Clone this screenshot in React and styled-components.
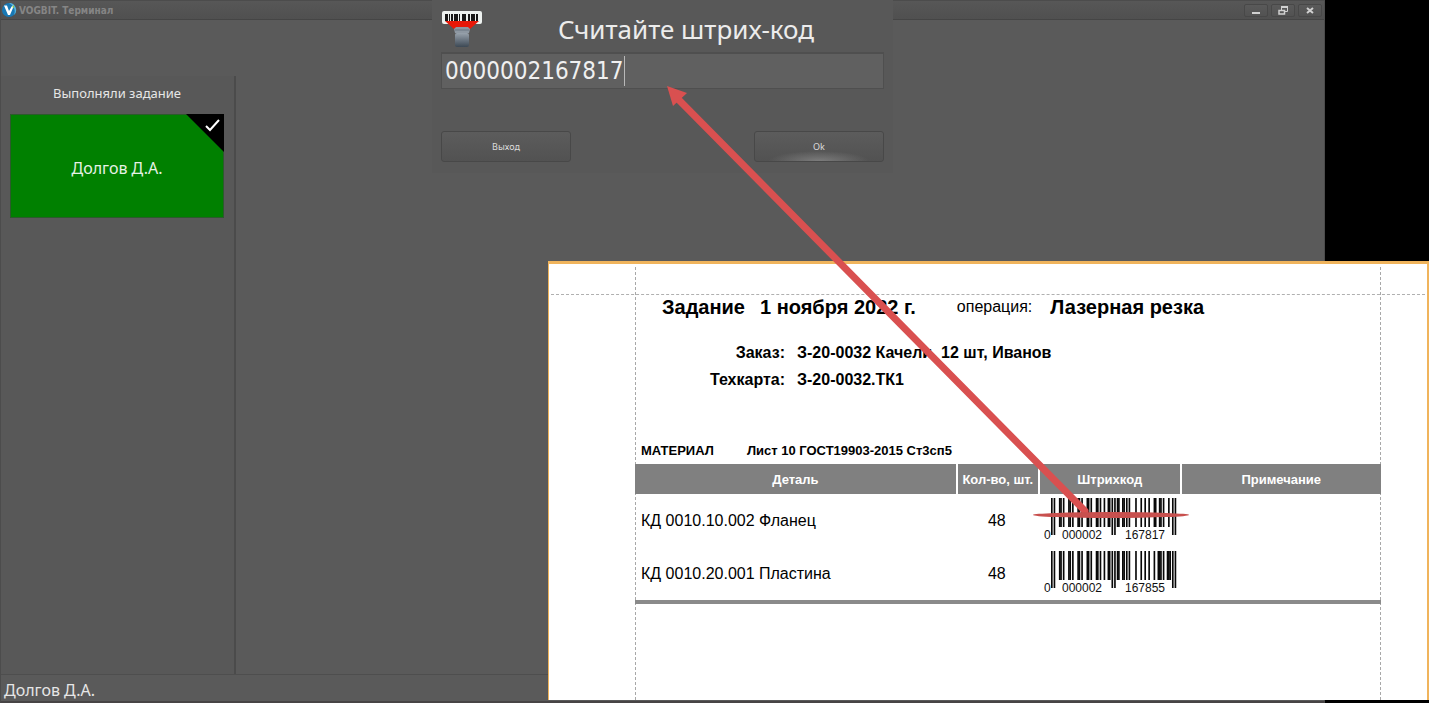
import React, { useState } from 'react'
import styled, { createGlobalStyle } from 'styled-components'

const GlobalStyle = createGlobalStyle`
  * {
    box-sizing: border-box;
  }
  body {
    margin: 0;
    background: #000;
    font-family: "Noto Sans", "DejaVu Sans", sans-serif;
  }
`;

const Desktop = styled.div`
  position: relative;
  display: flex;
  min-height: 100vh;
  padding-right: 104px;
  overflow: hidden;
`;

const Terminal = styled.main`
  flex: 1;
  display: flex;
  flex-direction: column;
  background: #5a5a5a;
  border: 1px solid #4c4c4c;
  border-bottom: 2px solid #474445;
  color: #e6e6e6;
`;

const TitleBar = styled.header`
  display: flex;
  align-items: center;
  gap: 2px;
  height: 19px;
  padding: 0 2px 0 0;
  background: linear-gradient(#575757, #505050);
  border-bottom: 1px solid #454545;
  h1 {
    flex: 1;
    margin: 0;
    color: #858585;
    font-family: "DejaVu Sans Condensed", "DejaVu Sans", sans-serif;
    font-size: 10px;
    font-weight: bold;
  }
`;

const WindowButtons = styled.div`
  display: flex;
  gap: 3px;
`;

const WindowButton = styled.button`
  display: flex;
  align-items: center;
  justify-content: center;
  width: 24px;
  height: 13px;
  padding: 0;
  border: 1px solid #484848;
  border-radius: 2px;
  background: linear-gradient(#5a5a5a, #525252);
`;

const Workspace = styled.div`
  flex: 1;
  display: flex;
  padding-top: 56px;
`;

const Sidebar = styled.aside`
  display: flex;
  flex-direction: column;
  width: 235px;
  padding: 7px 10px 0 9px;
  background: #585858;
  border-right: 2px solid #4b4b4b;
  h2 {
    margin: 0 0 10px;
    font-size: 13px;
    font-weight: normal;
    line-height: 21px;
    text-align: center;
  }
`;

const WorkerCard = styled.button`
  position: relative;
  height: 104px;
  padding: 4px 0 0;
  border: 1px solid #2c5a2c;
  background: #008000;
  color: #e6f2e6;
  font-family: inherit;
  font-size: 16px;
`;

const DoneMark = styled.svg`
  position: absolute;
  top: -1px;
  right: -1px;
`;

const StatusBar = styled.footer`
  padding: 3px 3px 0;
  height: 27px;
  border-top: 1px solid #4e4e4e;
  font-size: 16px;
  line-height: 25px;
`;

const ScanDialog = styled.form`
  position: absolute;
  top: 0;
  left: 432px;
  width: 461px;
  padding: 10px 9px 11px;
  background: #585858;
  color: #ececec;
`;

const DialogHead = styled.div`
  display: flex;
  height: 42px;
  label {
    flex: 1;
    padding-left: 5px;
    font-size: 26px;
    line-height: 39px;
    text-align: center;
  }
`;

const CodeField = styled.div`
  display: flex;
  align-items: center;
  height: 37px;
  padding-left: 3px;
  border: 1px solid #4f4f4f;
  border-top-width: 2px;
  background: #606060;
  input {
    field-sizing: content;
    padding: 0;
    border: 0;
    outline: 0;
    background: none;
    color: #f0f0f0;
    font-family: "DejaVu Sans Condensed", "DejaVu Sans", sans-serif;
    font-size: 24px;
  }
`;

const Caret = styled.span`
  width: 1px;
  height: 30px;
  background: #b8b8b8;
`;

const DialogActions = styled.div`
  display: flex;
  justify-content: space-between;
  padding-top: 42px;
`;

const DialogButton = styled.button`
  width: 130px;
  height: 31px;
  padding: 0;
  border: 1px solid #484848;
  border-radius: 3px;
  background: ${({ $primary }) => ($primary
    ? 'radial-gradient(ellipse 50px 10px at 50% 100%, #7c7c7c, transparent), linear-gradient(#5c5c5c, #525252)'
    : 'linear-gradient(#5c5c5c, #525252)')};
  color: #dcdcdc;
  font-family: inherit;
  font-size: 9px;
`;

const Sheet = styled.section`
  position: absolute;
  top: 261px;
  right: 0;
  bottom: 3px;
  left: 548px;
  padding: 3px 46px 0 86px;
  border: 1px solid #f0b45c;
  border-width: 3px 2px 0 1px;
  background: #fff;
  color: #000;
  font-family: "Liberation Sans", Arial, sans-serif;
  &::before {
    content: "";
    position: absolute;
    top: 30px;
    right: 2px;
    left: 2px;
    border-top: 1px dashed #b0b0b0;
  }
`;

const Page = styled.article`
  height: 100%;
  padding-top: 28px;
  border: 1px dashed #a8a8a8;
  border-width: 0 1px;
`;

const SheetTitle = styled.div`
  display: flex;
  align-items: center;
  padding-left: 26px;
  line-height: 24px;
  font-size: 16px;
  h2 {
    display: flex;
    gap: 15px;
    margin: 0;
    font-size: 20px;
  }
  h2:first-child {
    margin-right: 41px;
  }
  span {
    margin-right: 18px;
  }
`;

const Details = styled.dl`
  display: grid;
  grid-template-columns: 149px 1fr;
  column-gap: 12px;
  margin: 20px 0 45px;
  font-size: 16px;
  font-weight: bold;
  line-height: 27px;
  dt {
    text-align: right;
  }
  dd {
    margin: 0;
  }
`;

const Material = styled.p`
  display: flex;
  gap: 33px;
  margin: 0;
  padding-left: 5px;
  font-size: 13px;
  font-weight: bold;
  line-height: 26px;
`;

const PartsTable = styled.table`
  width: calc(100% + 2px);
  margin: 0 -1px;
  border-spacing: 0;
  border-bottom: 4px solid #8a8a8a;
  table-layout: fixed;
  font-size: 16px;
  th {
    height: 30px;
    padding: 0;
    background: #808080;
    color: #fff;
    font-size: 13px;
  }
  th + th {
    border-left: 2px solid #fff;
  }
  td {
    height: 53px;
    padding: 0 0 0 6px;
  }
  td:nth-child(2) {
    padding: 0;
    text-align: center;
  }
`;

const Barcode = styled.svg`
  display: block;
`;

const Pointer = styled.svg`
  position: absolute;
  top: 0;
  left: 0;
  pointer-events: none;
`;

const parts = [
  { name: 'КД 0010.10.002 Фланец', count: 48, code: '0000002167817' },
  { name: 'КД 0010.20.001 Пластина', count: 48, code: '0000002167855' },
];

const L_CODES = ['0001101', '0011001', '0010011', '0111101', '0100011', '0110001', '0101111', '0111011', '0110111', '0001011'];

// EAN-13 with a leading zero: the left half only uses the L set
const encode = (code) => {
  const left = [...code.slice(1, 7)].map((d) => L_CODES[d]).join('');
  const right = [...code.slice(7)].map((d) => L_CODES[d].replace(/./g, (b) => (b === '1' ? '0' : '1'))).join('');
  return '101' + left + '01010' + right + '101';
};

const isGuard = (i) => i < 3 || i > 91 || (i > 44 && i < 50);

const EanCode = ({ code }) => (
  <Barcode width="136" height="45" role="img" aria-label={code}>
    <g transform="translate(7 0) scale(1.315 1)">
      {[...encode(code)].map((bit, i) => bit === '1' && (
        <rect key={i} x={i} y="0" width="1.250" height={isGuard(i) ? 37 : 29} fill="#080808" />
      ))}
    </g>
    <g fontSize="12" fill="#111">
      <text x="0" y="41">{code[0]}</text>
      <text x="18" y="41">{code.slice(1, 7)}</text>
      <text x="81" y="41">{code.slice(7)}</text>
    </g>
  </Barcode>
);

const Logo = () => (
  <svg width="16" height="16" viewBox="0 0 16 16">
    <circle cx="8" cy="8" r="7" fill="#1878b4" />
    <path d="M8 1a7 7 0 0 1 5 12c2-5 0-9-5-12z" fill="#58b4dc" />
    <path d="M3 3.500L6 3.500L8 9L11 4L13 3.500L9 13L7 13Z" fill="#fff" />
    <path d="M11 5l2-2 0 3z" fill="#8cc850" />
  </svg>
);

const ScannerIcon = () => (
  <svg width="42" height="40" viewBox="0 0 42 40">
    <defs>
      <linearGradient id="handle" x1="0" y1="0" x2="0" y2="1">
        <stop offset="0" stopColor="#98a2ac" />
        <stop offset="1" stopColor="#3c4854" />
      </linearGradient>
    </defs>
    <rect x="1" y="1" width="40" height="13" rx="2" fill="#eef2f0" />
    <path d="M4 4h3v7H4zM8 4h1v7H8zM10 4h2v7h-2zM13 4h4v7h-4zM18 4h1v7h-1zM21 4h4v7h-4zM27 4h2v7h-2zM30 4h4v7h-4zM35 4h2v7h-2z" fill="#181818" />
    <path d="M4 11h34l-9 8H13z" fill="#e81808" />
    <path d="M15 17h12l2 2-1 4H14l-1-4z" fill="#8e98a2" />
    <path d="M14 20h14" stroke="#687480" strokeWidth="1" />
    <rect x="14" y="23" width="14" height="14" rx="2" fill="url(#handle)" />
  </svg>
);

const App = () => {
  const [code, setCode] = useState('0000002167817');

  return (
    <Desktop>
      <GlobalStyle />
      <Terminal>
        <TitleBar>
          <Logo />
          <h1>VOGBIT. Терминал</h1>
          <WindowButtons>
            <WindowButton aria-label="Свернуть">
              <svg width="10" height="9"><path d="M1 7h8" stroke="#d0d0d0" strokeWidth="2" /></svg>
            </WindowButton>
            <WindowButton aria-label="Восстановить">
              <svg width="10" height="9" fill="none" stroke="#d0d0d0">
                <path d="M3.500 4V1.500h6v4H7" />
                <path d="M3 1h7" strokeWidth="2" />
                <rect x="1" y="4.500" width="5.500" height="3.500" strokeWidth="1.500" />
              </svg>
            </WindowButton>
            <WindowButton aria-label="Закрыть">
              <svg width="10" height="9"><path d="M2 2l6 5M8 2l-6 5" stroke="#d0d0d0" strokeWidth="2" /></svg>
            </WindowButton>
          </WindowButtons>
        </TitleBar>
        <Workspace>
          <Sidebar>
            <h2>Выполняли задание</h2>
            <WorkerCard>
              Долгов Д.А.
              <DoneMark width="38" height="38">
                <path d="M0 0h38v38z" fill="#000" />
                <path d="M20 12l4 4 9-10" fill="none" stroke="#fff" strokeWidth="2" />
              </DoneMark>
            </WorkerCard>
          </Sidebar>
        </Workspace>
        <StatusBar>Долгов Д.А.</StatusBar>
      </Terminal>

      <ScanDialog onSubmit={(e) => e.preventDefault()}>
        <DialogHead>
          <ScannerIcon />
          <label htmlFor="code">Считайте штрих-код</label>
        </DialogHead>
        <CodeField>
          <input id="code" value={code} onChange={(e) => setCode(e.target.value)} />
          <Caret />
        </CodeField>
        <DialogActions>
          <DialogButton type="button">Выход</DialogButton>
          <DialogButton $primary>Ok</DialogButton>
        </DialogActions>
      </ScanDialog>

      <Sheet>
        <Page>
          <SheetTitle>
            <h2>
              <b>Задание</b>
              <b>1 ноября 2022 г.</b>
            </h2>
            <span>операция:</span>
            <h2>Лазерная резка</h2>
          </SheetTitle>
          <Details>
            <dt>Заказ:</dt>
            <dd>З-20-0032 Качели, 12 шт, Иванов</dd>
            <dt>Техкарта:</dt>
            <dd>З-20-0032.ТК1</dd>
          </Details>
          <Material>
            <span>МАТЕРИАЛ</span>
            <span>Лист 10 ГОСТ19903-2015 Ст3сп5</span>
          </Material>
          <PartsTable>
            <colgroup>
              <col width="43%" />
              <col width="11%" />
              <col width="19%" />
              <col />
            </colgroup>
            <thead>
              <tr>
                <th>Деталь</th>
                <th>Кол-во, шт.</th>
                <th>Штрихкод</th>
                <th>Примечание</th>
              </tr>
            </thead>
            <tbody>
              {parts.map((part) => (
                <tr key={part.code}>
                  <td>{part.name}</td>
                  <td>{part.count}</td>
                  <td><EanCode code={part.code} /></td>
                  <td />
                </tr>
              ))}
            </tbody>
          </PartsTable>
        </Page>
      </Sheet>

      <Pointer width="1200" height="530">
        <path d="M676 97L1085 511" stroke="#d95050" strokeWidth="7" strokeLinecap="round" />
        <path d="M667 86l20 7-14 13z" fill="#d95050" />
        <ellipse cx="1111" cy="515" rx="78" ry="3" fill="#c8504e" />
      </Pointer>
    </Desktop>
  );
}

export default App
